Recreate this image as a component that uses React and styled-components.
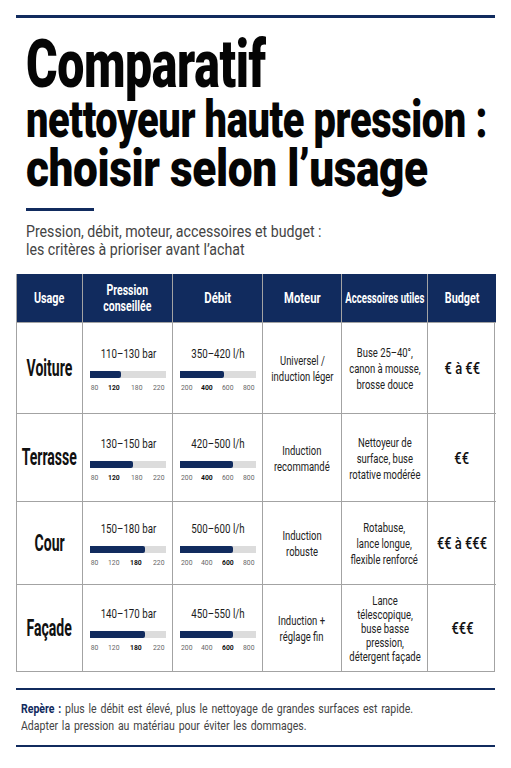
import React from 'react';
import styled, { createGlobalStyle } from 'styled-components';

const NAVY = '#112b5e';
const LINE = '#a3a3a3';
const FONT = 'Roboto, "Liberation Sans", sans-serif';

const rows = [
  {
    usage: 'Voiture',
    pression: '110–130 bar',
    pFill: 41,
    pBold: '120',
    debit: '350–420 l/h',
    dFill: 58,
    dBold: '400',
    moteur: ['Universel /', 'induction léger'],
    acc: ['Buse 25–40°,', 'canon à mousse,', 'brosse douce'],
    budget: '€ à €€',
  },
  {
    usage: 'Terrasse',
    pression: '130–150 bar',
    pFill: 57,
    pBold: '120',
    debit: '420–500 l/h',
    dFill: 70,
    dBold: '400',
    moteur: ['Induction', 'recommandé'],
    acc: ['Nettoyeur de', 'surface, buse', 'rotative modérée'],
    budget: '€€',
  },
  {
    usage: 'Cour',
    pression: '150–180 bar',
    pFill: 73,
    pBold: '180',
    debit: '500–600 l/h',
    dFill: 70,
    dBold: '600',
    moteur: ['Induction', 'robuste'],
    acc: ['Rotabuse,', 'lance longue,', 'flexible renforcé'],
    budget: '€€ à €€€',
  },
  {
    usage: 'Façade',
    pression: '140–170 bar',
    pFill: 73,
    pBold: '180',
    debit: '450–550 l/h',
    dFill: 70,
    dBold: '600',
    moteur: ['Induction +', 'réglage fin'],
    acc: ['Lance', 'télescopique,', 'buse basse', 'pression,', 'détergent façade'],
    budget: '€€€',
  },
];

const pTicks = ['80', '120', '180', '220'];
const dTicks = ['200', '400', '600', '800'];

const App = () => {
  return (
    <>
      <GlobalStyle />
      <Page>
        <Rule />
        <Title>
          <TitleLine big $s={0.73}>Comparatif</TitleLine>
          <TitleLine $s={0.765}>nettoyeur haute pression :</TitleLine>
          <TitleLine $s={0.85}>choisir selon l’usage</TitleLine>
        </Title>
        <ShortRule />
        <Subtitle>
          <div>Pression, débit, moteur, accessoires et budget :</div>
          <div>les critères à prioriser avant l’achat</div>
        </Subtitle>

        <Table>
          <Head>
            <Squeeze $s={0.72}>Usage</Squeeze>
          </Head>
          <Head>
            <Squeeze $s={0.7}>
              <div>Pression</div>
              <div>conseillée</div>
            </Squeeze>
          </Head>
          <Head>
            <Squeeze $s={0.76}>Débit</Squeeze>
          </Head>
          <Head>
            <Squeeze $s={0.75}>Moteur</Squeeze>
          </Head>
          <Head>
            <Squeeze $s={0.64}>Accessoires utiles</Squeeze>
          </Head>
          <Head last>
            <Squeeze $s={0.72}>Budget</Squeeze>
          </Head>

          {rows.map((r) => (
            <React.Fragment key={r.usage}>
              <Cell>
                <Usage>{r.usage}</Usage>
              </Cell>
              <Cell>
                <Gauge value={r.pression} fill={r.pFill} ticks={pTicks} bold={r.pBold} />
              </Cell>
              <Cell>
                <Gauge value={r.debit} fill={r.dFill} ticks={dTicks} bold={r.dBold} />
              </Cell>
              <Cell>
                <Text>
                  {r.moteur.map((l) => (
                    <div key={l}>{l}</div>
                  ))}
                </Text>
              </Cell>
              <Cell>
                <Text dense={r.acc.length > 3}>
                  {r.acc.map((l) => (
                    <div key={l}>{l}</div>
                  ))}
                </Text>
              </Cell>
              <Cell last>
                <Budget>{r.budget}</Budget>
              </Cell>
            </React.Fragment>
          ))}
        </Table>

        <Footer>
          <FootText>
            <div>
              <strong>Repère :</strong> plus le débit est élevé, plus le nettoyage de grandes surfaces est rapide.
            </div>
            <div>Adapter la pression au matériau pour éviter les dommages.</div>
          </FootText>
        </Footer>
      </Page>
    </>
  );
};

const Gauge = ({ value, fill, ticks, bold }) => (
  <GaugeWrap>
    <Value>{value}</Value>
    <Track>
      <Fill style={{ width: `${fill}%` }} />
    </Track>
    <Ticks>
      {ticks.map((t) => (
        <Tick key={t} bold={t === bold}>
          {t}
        </Tick>
      ))}
    </Ticks>
  </GaugeWrap>
);

export default App;

const GlobalStyle = createGlobalStyle`
  body {
    margin: 0;
    background: #fff;
    font-family: ${FONT};
    color: #1b1b1b;
  }
`;

const Page = styled.div`
  width: 511px;
  padding: 15px 16px 0;
  box-sizing: border-box;
`;

const Rule = styled.div`
  height: 3px;
  background: ${NAVY};
`;

const Title = styled.h1`
  margin: 16px 0 0 10px;
  font-family: Roboto, "Liberation Sans", sans-serif;
  font-weight: 900;
  color: #050505;
`;

const TitleLine = styled.span`
  display: block;
  white-space: nowrap;
  font-size: ${(p) => (p.big ? '66px' : '52px')};
  line-height: ${(p) => (p.big ? '61px' : '49px')};
  letter-spacing: -0.5px;
  transform: scaleX(${(p) => p.$s});
  transform-origin: left;
`;

const ShortRule = styled.div`
  width: 68px;
  height: 3px;
  margin: 15px 0 0 10px;
  background: ${NAVY};
`;

const Subtitle = styled.div`
  margin: 12px 0 0 10px;
  font-size: 16px;
  line-height: 18px;
  color: #444;
  white-space: nowrap;
  transform: scaleX(0.885);
  transform-origin: left;
`;

const Table = styled.div`
  display: grid;
  grid-template-columns: 66px 90px 90px 79px 86px 68px;
  grid-template-rows: 48px 91px 88px 83px 87px;
  margin-top: 15px;
  border: 1px solid ${LINE};
  border-top: none;
`;

const Squeeze = styled.div`
  display: inline-block;
  white-space: nowrap;
  transform: scaleX(${(p) => p.$s});
`;

const Head = styled.div`
  display: flex;
  align-items: center;
  justify-content: center;
  text-align: center;
  background: ${NAVY};
  color: #fff;
  font-weight: 700;
  font-size: 15px;
  line-height: 16px;
  border-right: ${(p) => (p.last ? 'none' : `1px solid ${LINE}`)};
`;

const Cell = styled.div`
  display: flex;
  align-items: center;
  justify-content: center;
  text-align: center;
  border-right: ${(p) => (p.last ? 'none' : `1px solid ${LINE}`)};
  border-top: 1px solid ${LINE};
`;

const Usage = styled.div`
  font-size: 23px;
  font-weight: 700;
  color: #111;
  white-space: nowrap;
  transform: scaleX(0.61);
`;

const GaugeWrap = styled.div`
  width: 76px;
`;

const Value = styled.div`
  font-size: 13.5px;
  line-height: 18px;
  margin-bottom: 9px;
  color: #1b1b1b;
  white-space: nowrap;
  transform: scaleX(0.72);
`;

const Track = styled.div`
  height: 7px;
  background: #dcdcdc;
`;

const Fill = styled.div`
  height: 100%;
  background: ${NAVY};
  border-radius: 0 2px 2px 0;
`;

const Ticks = styled.div`
  display: flex;
  justify-content: space-between;
  margin-top: 5px;
  font-size: 8px;
`;

const Tick = styled.span`
  font-weight: ${(p) => (p.bold ? 700 : 400)};
  color: ${(p) => (p.bold ? '#111' : '#666')};
  transform: scaleX(0.85);
`;

const Text = styled.div`
  font-size: 13.5px;
  line-height: ${(p) => (p.dense ? '14px' : '16px')};
  color: #222;
  white-space: nowrap;
  transform: scaleX(0.7);
`;

const Budget = styled.div`
  font-size: 17px;
  font-weight: 500;
  color: #111;
  white-space: nowrap;
  transform: scaleX(0.76);
`;

const Footer = styled.div`
  margin-top: 16px;
  border-top: 2px solid ${NAVY};
  border-bottom: 2px solid ${NAVY};
  padding: 10px 5px 11px;
`;

const FootText = styled.div`
  font-size: 13.5px;
  line-height: 17px;
  color: #444;
  white-space: nowrap;
  word-spacing: 1.5px;
  transform: scaleX(0.78);
  transform-origin: left;

  strong {
    color: ${NAVY};
  }
`;
